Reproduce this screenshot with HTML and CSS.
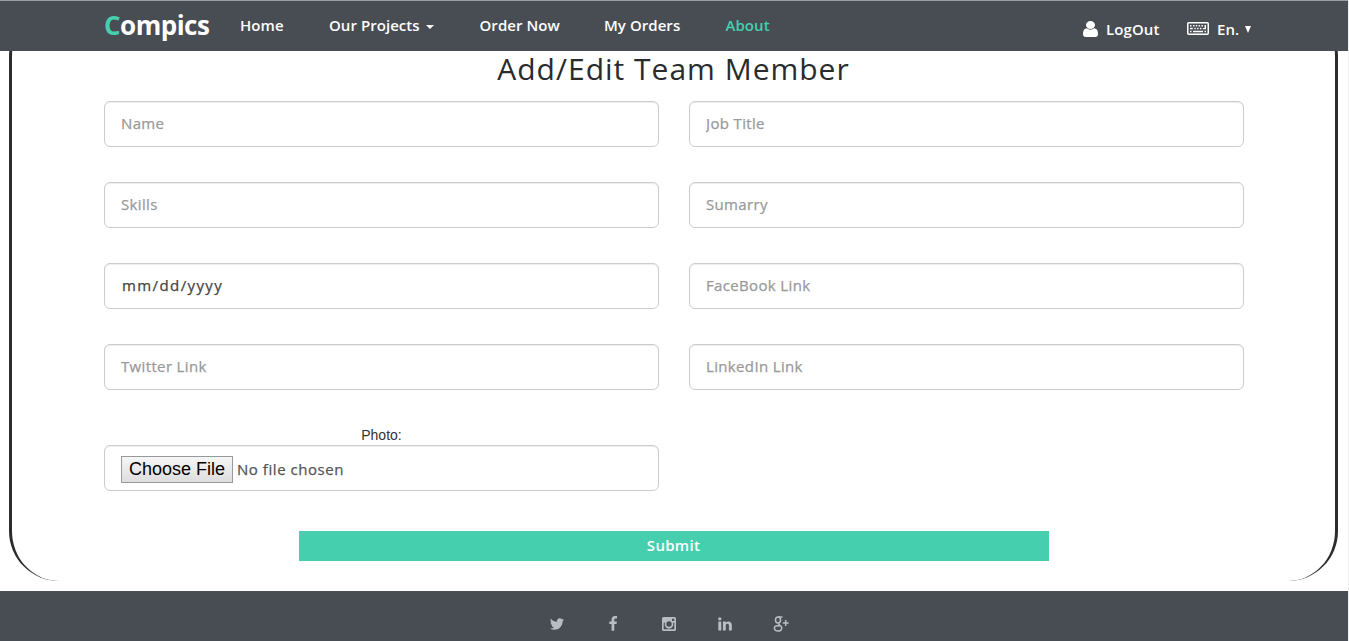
FILE: index.html
```html
<!DOCTYPE html>
<html lang="en">
<head>
<meta charset="utf-8">
<title>Compics</title>
<link rel="stylesheet" href="styles.css">
</head>
<body>
<header class="navbar">
  <a class="brand"><span class="brand-initial">C</span>ompics</a>
  <nav class="menu">
    <a class="menu-home">Home</a>
    <a class="menu-projects">Our Projects<i class="caret"></i></a>
    <a class="menu-order">Order Now</a>
    <a class="menu-orders">My Orders</a>
    <a class="active">About</a>
  </nav>
  <div class="account">
    <a class="logout"><svg class="user-icon" viewBox="256 128 1280 1536" preserveAspectRatio="none"><path d="M1536 1399q0 109-62.5 187t-150.5 78h-854q-88 0-150.5-78t-62.5-187q0-85 8.5-160.5t31.5-152 58.5-131 94-89 134.5-34.5q131 128 313 128t313-128q76 0 134.5 34.5t94 89 58.5 131 31.5 152 8.5 160.5zm-256-887q0 159-112.5 271.5t-271.5 112.5-271.5-112.5-112.5-271.5 112.5-271.5 271.5-112.5 271.5 112.5 112.5 271.5z"/></svg><span>LogOut</span></a>
    <a class="language"><svg class="keyboard-icon" viewBox="0 0 22 13"><rect x=".75" y=".75" width="20.5" height="11.5" rx="1" fill="none" stroke="currentColor" stroke-width="1.5"/><path d="M3 3h1.5v1.5H3zM6 3h1.5v1.5H6zM8.8 3h1.5v1.5H8.800zM11.600 3h1.500v1.500h-1.500zM14.400 3h1.500v1.500h-1.500zM17.500 3H19v4.300h-3.200V5.900h1.700zM3 5.800h2.800v1.500H3zM7.300 5.800h1.500v1.500H7.300zM10.100 5.800h1.500v1.500h-1.500zM12.900 5.800h1.500v1.500h-1.500zM3 8.700h1.500v1.500H3zM6 8.700h10v1.500H6zM17.500 8.700H19v1.500h-1.500z"/></svg><span>En.</span><i class="triangle"></i></a>
  </div>
</header>
<main class="panel">
  <h1>Add/Edit Team Member</h1>
  <form class="fields">
    <input class="control" placeholder="Name">
    <input class="control" placeholder="Job Title">
    <input class="control" placeholder="Skills">
    <input class="control" placeholder="Sumarry">
    <div class="control date">mm/dd/yyyy</div>
    <input class="control" placeholder="FaceBook Link">
    <input class="control" placeholder="Twitter Link">
    <input class="control" placeholder="LinkedIn Link">
    <div class="upload">
      <label>Photo:</label>
      <div class="control file"><button type="button">Choose File</button><span>No file chosen</span></div>
    </div>
  </form>
  <button class="submit" type="button">Submit</button>
</main>
<footer class="footer">
  <svg viewBox="0 0 1792 1792"><path d="M1684 408q-67 98-162 167 1 14 1 42 0 130-38 259.500t-115.500 248.500-184.500 210.500-258 146-323 54.500q-271 0-496-145 35 4 78 4 225 0 401-138-105-2-188-64.500t-114-159.500q33 5 61 5 43 0 85-11-112-23-185.500-111.500t-73.500-205.500v-4q68 38 146 41-66-44-105-115t-39-154q0-88 44-163 121 149 294.500 238.500t371.500 99.500q-8-38-8-74 0-134 94.500-228.500t228.500-94.500q140 0 236 102 109-21 205-78-37 115-142 178 93-10 186-50z"/></svg>
  <svg viewBox="0 0 1792 1792"><path d="M1343 12v264h-157q-86 0-116 36t-30 108v189h293l-39 296h-254v759h-306v-759h-255v-296h255v-218q0-186 104-288.500t277-102.500q147 0 228 12z"/></svg>
  <svg viewBox="0 0 16 16"><path fill-rule="evenodd" d="M2.500 1h11A1.500 1.500 0 0 1 15 2.500v11a1.500 1.500 0 0 1-1.500 1.500h-11A1.500 1.500 0 0 1 1 13.500v-11A1.500 1.500 0 0 1 2.500 1zM11 2.700v2.200h2.300V2.700zM2.700 6.800v6.400h10.600V6.800H12A4.300 4.300 0 1 1 4 6.800zM8 5.300a2.700 2.700 0 1 0 0 5.400 2.700 2.700 0 0 0 0-5.400z"/></svg>
  <svg viewBox="0 0 1792 1792"><path d="M477 625v991h-330v-991h330zm21-306q1 73-50.500 122t-135.500 49h-2q-82 0-132-49t-50-122q0-74 51.500-122.500t134.500-48.500 133 48.500 51 122.500zm1166 729v568h-329v-530q0-105-40.500-164.500t-126.500-59.500q-63 0-105.500 34.500t-63.500 85.500q-11 30-11 81v553h-329q2-399 2-647t-1-296l-1-48h329v144h-2q20-32 41-56t56.500-52 87-43.500 114.500-15.500q171 0 275 113.500t104 332.500z"/></svg>
  <svg viewBox="0 0 16 16"><g fill="none" stroke="currentColor" stroke-width="1.500"><ellipse cx="5" cy="4" rx="2.500" ry="3"/><path d="M5 1h4.500M6 7c-1 1 0 1.500 1 2.300C10 11.500 9 15 5 15S.300 11 3 10c1-.500 2-.500 4-.500M12.700 4v6M9.800 7h5.900"/></g></svg>
</footer>
</body>
</html>
```
FILE: styles.css
```css
* { box-sizing: border-box; }
body { margin: 0; width: 1348px; height: 641px; overflow: hidden; background: #fff; color: #292b2c; font-family: "Open Sans", "Noto Sans", sans-serif; }
html { background: #f1f1f1; overflow: hidden; }
.navbar { position: fixed; top: 0; left: 0; z-index: 2; width: 1348px; height: 51px; display: flex; padding-left: 104px; background: #484c53; border-top: 1px solid #98a0a6; color: #fff; white-space: nowrap; }
.brand { width: 136px; font-size: 26px; line-height: 48px; font-weight: 700; letter-spacing: -.5px; }
.brand-initial { color: #46cfae; }
.menu { display: flex; width: 843px; font-size: 15px; line-height: 49px; font-weight: 600; letter-spacing: .05px; }
.menu-home { width: 89px; }
.menu-projects { width: 150.5px; }
.menu-order { width: 124.5px; }
.menu-orders { width: 121.5px; }
.active { color: #46cfae; }
.caret { display: inline-block; margin-left: 6px; vertical-align: 2px; border: 4px solid transparent; border-top-color: #fff; border-bottom: 0; }
.account { display: flex; font-size: 15px; line-height: 56px; font-weight: 600; letter-spacing: .1px; }
.logout, .language { display: flex; }
.logout { width: 104px; }
.user-icon { width: 15px; height: 16px; margin: 20px 8px 0 0; fill: #fff; }
.keyboard-icon { width: 22px; height: 13px; margin: 21px 8px 0 0; fill: #fff; }
.triangle { height: 7px; margin: 25px 0 0 6px; border: 3.5px solid transparent; border-top: 7px solid #fff; border-bottom: 0; }
.panel { width: 1329px; height: 575px; margin: 6px 0 0 9px; padding: 45px 92px 0; border: solid #2c2c2c; border-width: 0 3px; border-radius: 50px; }
h1 { margin: 0; height: 50px; font-size: 30px; line-height: 36px; font-weight: 400; text-align: center; letter-spacing: 1px; }
.fields { display: grid; grid-template-columns: 555px 555px; column-gap: 30px; row-gap: 35px; }
.control { width: 555px; height: 46px; padding: 0 16px 2px; border: 1px solid #ccc; border-radius: 6px; background: #fff; box-shadow: inset 0 1px 1px rgba(0,0,0,.075); color: #555; font: 400 15px/42px "Open Sans", "Noto Sans", sans-serif; letter-spacing: .35px; -webkit-text-stroke: .25px currentColor; }
.control::placeholder { color: #999; opacity: 1; }
.date { padding-left: 17px; letter-spacing: 1.4px; color: #444; }
.upload { display: flex; flex-direction: column; padding-top: 3px; }
.upload label { height: 17px; font: 14px/15px "Liberation Sans", Arial, sans-serif; text-align: center; color: #333; }
.file { display: flex; padding-top: 10px; }
.file button { width: 112px; height: 27px; padding: 0; margin-right: 4px; border: 1px solid #999; background: linear-gradient(#f6f6f6, #ddd); color: #000; font: 18px/23px "Liberation Sans", Arial, sans-serif; white-space: nowrap; -webkit-text-stroke: 0; }
.file span { line-height: 27px; letter-spacing: .55px; }
.submit { display: block; width: 750px; height: 30px; margin: 40px auto 0; padding: 0 0 2px; border: 0; background: #46cfae; color: #fff; font: 600 15px/28px "Open Sans", "Noto Sans", sans-serif; letter-spacing: .3px; }
.footer { display: flex; justify-content: center; gap: 40px; height: 50px; margin-top: 10px; padding: 25px 11px 0 0; background: #484c53; color: #b9bcc0; }
.footer svg { width: 16px; height: 16px; fill: currentColor; }
```
